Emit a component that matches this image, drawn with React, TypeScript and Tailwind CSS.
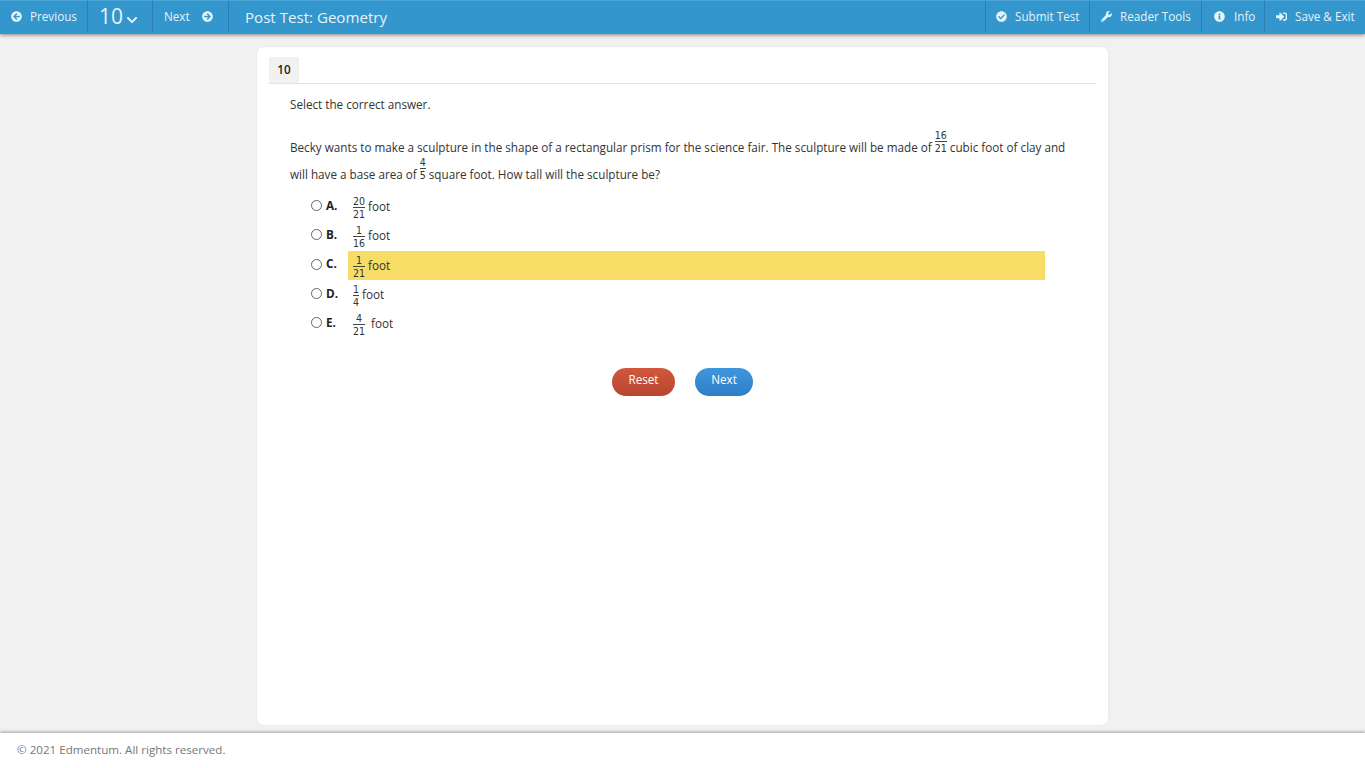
import React from "react";
import { FaArrowCircleLeft, FaArrowCircleRight, FaChevronDown, FaCheckCircle, FaWrench, FaInfoCircle, FaSignInAlt } from "react-icons/fa";

function Frac({ n, d, className = "" }: { n: string; d: string; className?: string }) {
  return (
    <span className={`inline-block text-center align-baseline font-['DejaVu_Sans_Condensed','DejaVu_Sans',sans-serif] text-[10.5px] leading-[11px] text-[#333] ${className}`}>
      <span className="block border-b border-[#444]">{n}</span>
      <span className="block pt-[1px]">{d}</span>
    </span>
  );
}

function NavBtn({ children, className = "" }: { children: React.ReactNode; className?: string }) {
  return <div className={`flex items-center h-full border-r border-[#2a7fae] text-[11.7px] text-[#e6f3fa] ${className}`}>{children}</div>;
}

const options = [
  { l: "A.", n: "20", d: "21", t: "foot", hl: false },
  { l: "B.", n: "1", d: "16", t: "foot", hl: false },
  { l: "C.", n: "1", d: "21", t: "foot", hl: true },
  { l: "D.", n: "1", d: "4", t: "foot", hl: false },
  { l: "E.", n: "4", d: "21", t: "\u00a0foot", hl: false },
];

export default function App() {
  return (
    <div className="h-[768px] w-[1365px] overflow-hidden flex flex-col bg-[#f1f1f1] font-['Open_Sans',sans-serif] text-[#333]">
      <header className="h-[34px] shrink-0 bg-[#3396cc] border-t border-[#4aa5d6] shadow-[0_1px_4px_rgba(0,0,0,0.45)] flex items-center justify-between relative z-10 pb-[2px]">
        <div className="flex items-center h-full">
          <NavBtn className="w-[88px] pl-[11px] gap-[8px]"><FaArrowCircleLeft className="text-[11px]" /><span>Previous</span></NavBtn>
          <NavBtn className="w-[65px] pl-[11px]"><span className="text-[21px] leading-none">10</span><FaChevronDown className="text-[12px] ml-[3px] mt-[6px]" /></NavBtn>
          <NavBtn className="w-[76px] pl-[11px] gap-[12px]"><span>Next</span><FaArrowCircleRight className="text-[11px]" /></NavBtn>
          <div className="pl-[16px] pt-[1px] text-[15.1px] text-[#e6f3fa]">Post Test: Geometry</div>
        </div>
        <div className="flex items-center h-full">
          <NavBtn className="w-[105px] pl-[10px] gap-[8px] border-l"><FaCheckCircle className="text-[11px]" /><span>Submit Test</span></NavBtn>
          <NavBtn className="w-[112px] pl-[11px] gap-[8px]"><FaWrench className="text-[11px]" /><span>Reader Tools</span></NavBtn>
          <NavBtn className="w-[63px] pl-[12px] gap-[9px]"><FaInfoCircle className="text-[11px]" /><span>Info</span></NavBtn>
          <div className="flex items-center h-full w-[100px] pl-[11px] gap-[8px] text-[11.7px] text-[#e6f3fa]"><FaSignInAlt className="text-[11px]" /><span>Save &amp; Exit</span></div>
        </div>
      </header>

      <main className="flex-1 min-h-0 flex justify-center pt-[12px] pb-[7px]">
        <section className="w-[853px] h-full bg-white rounded-[8px] border border-[#ececec] pt-[10px] px-[12px]">
          <div className="border-b border-[#e3e3e3] h-[27px]">
            <div className="w-[30px] h-[26px] bg-[#f1f1f1] flex items-center justify-center text-[11.7px] font-semibold text-[#222]">10</div>
          </div>
          <div className="pl-[21px] pr-[20px] text-[11.7px] text-[#333]">
            <p className="mt-[11px] leading-[18px]">Select the correct answer.</p>
            <p className="mt-[17px] leading-[19px]">
              Becky wants to make a sculpture in the shape of a rectangular prism for the science fair. The sculpture will be made of <Frac n="16" d="21" /> cubic foot of clay and will have a base area of <Frac n="4" d="5" /> square foot. How tall will the sculpture be?
            </p>
            <div className="mt-[8px] flex flex-col">
              {options.map((o) => (
                <div key={o.l} className="flex items-center h-[29.25px] pl-[21px]">
                  <span className="w-[11px] h-[11px] rounded-full border border-[#666] bg-white shrink-0 mb-[2px]" />
                  <span className="w-[26px] pl-[4px] shrink-0 text-[11.7px] font-bold text-[#222] mb-[2px]">{o.l}</span>
                  <div className={`w-[697px] h-full flex items-center pl-[5px] ${o.hl ? "bg-[#f7dc66]" : ""}`}>
                    <Frac n={o.n} d={o.d} className="mt-[3px]" />
                    <span className={o.hl ? "ml-[3px] mt-[1px]" : "ml-[3px]"}>{o.t}</span>
                  </div>
                </div>
              ))}
            </div>
            <div className="mt-[30px] flex justify-center gap-[20px] pr-[1px]">
              <button className="w-[63px] h-[28px] pb-[4px] rounded-full text-white text-[11.7px] font-medium bg-gradient-to-b from-[#d1573f] to-[#b8452f]">Reset</button>
              <button className="w-[58px] h-[28px] pb-[4px] rounded-full text-white text-[11.7px] font-medium bg-gradient-to-b from-[#3f96dc] to-[#2f7fc8]">Next</button>
            </div>
          </div>
        </section>
      </main>

      <footer className="h-[35px] shrink-0 bg-white shadow-[0_-1px_3px_rgba(0,0,0,0.35)] flex items-center pl-[17px] text-[11.6px] text-[#777] pb-[2px]">
        © 2021 Edmentum. All rights reserved.
      </footer>
    </div>
  );
}
